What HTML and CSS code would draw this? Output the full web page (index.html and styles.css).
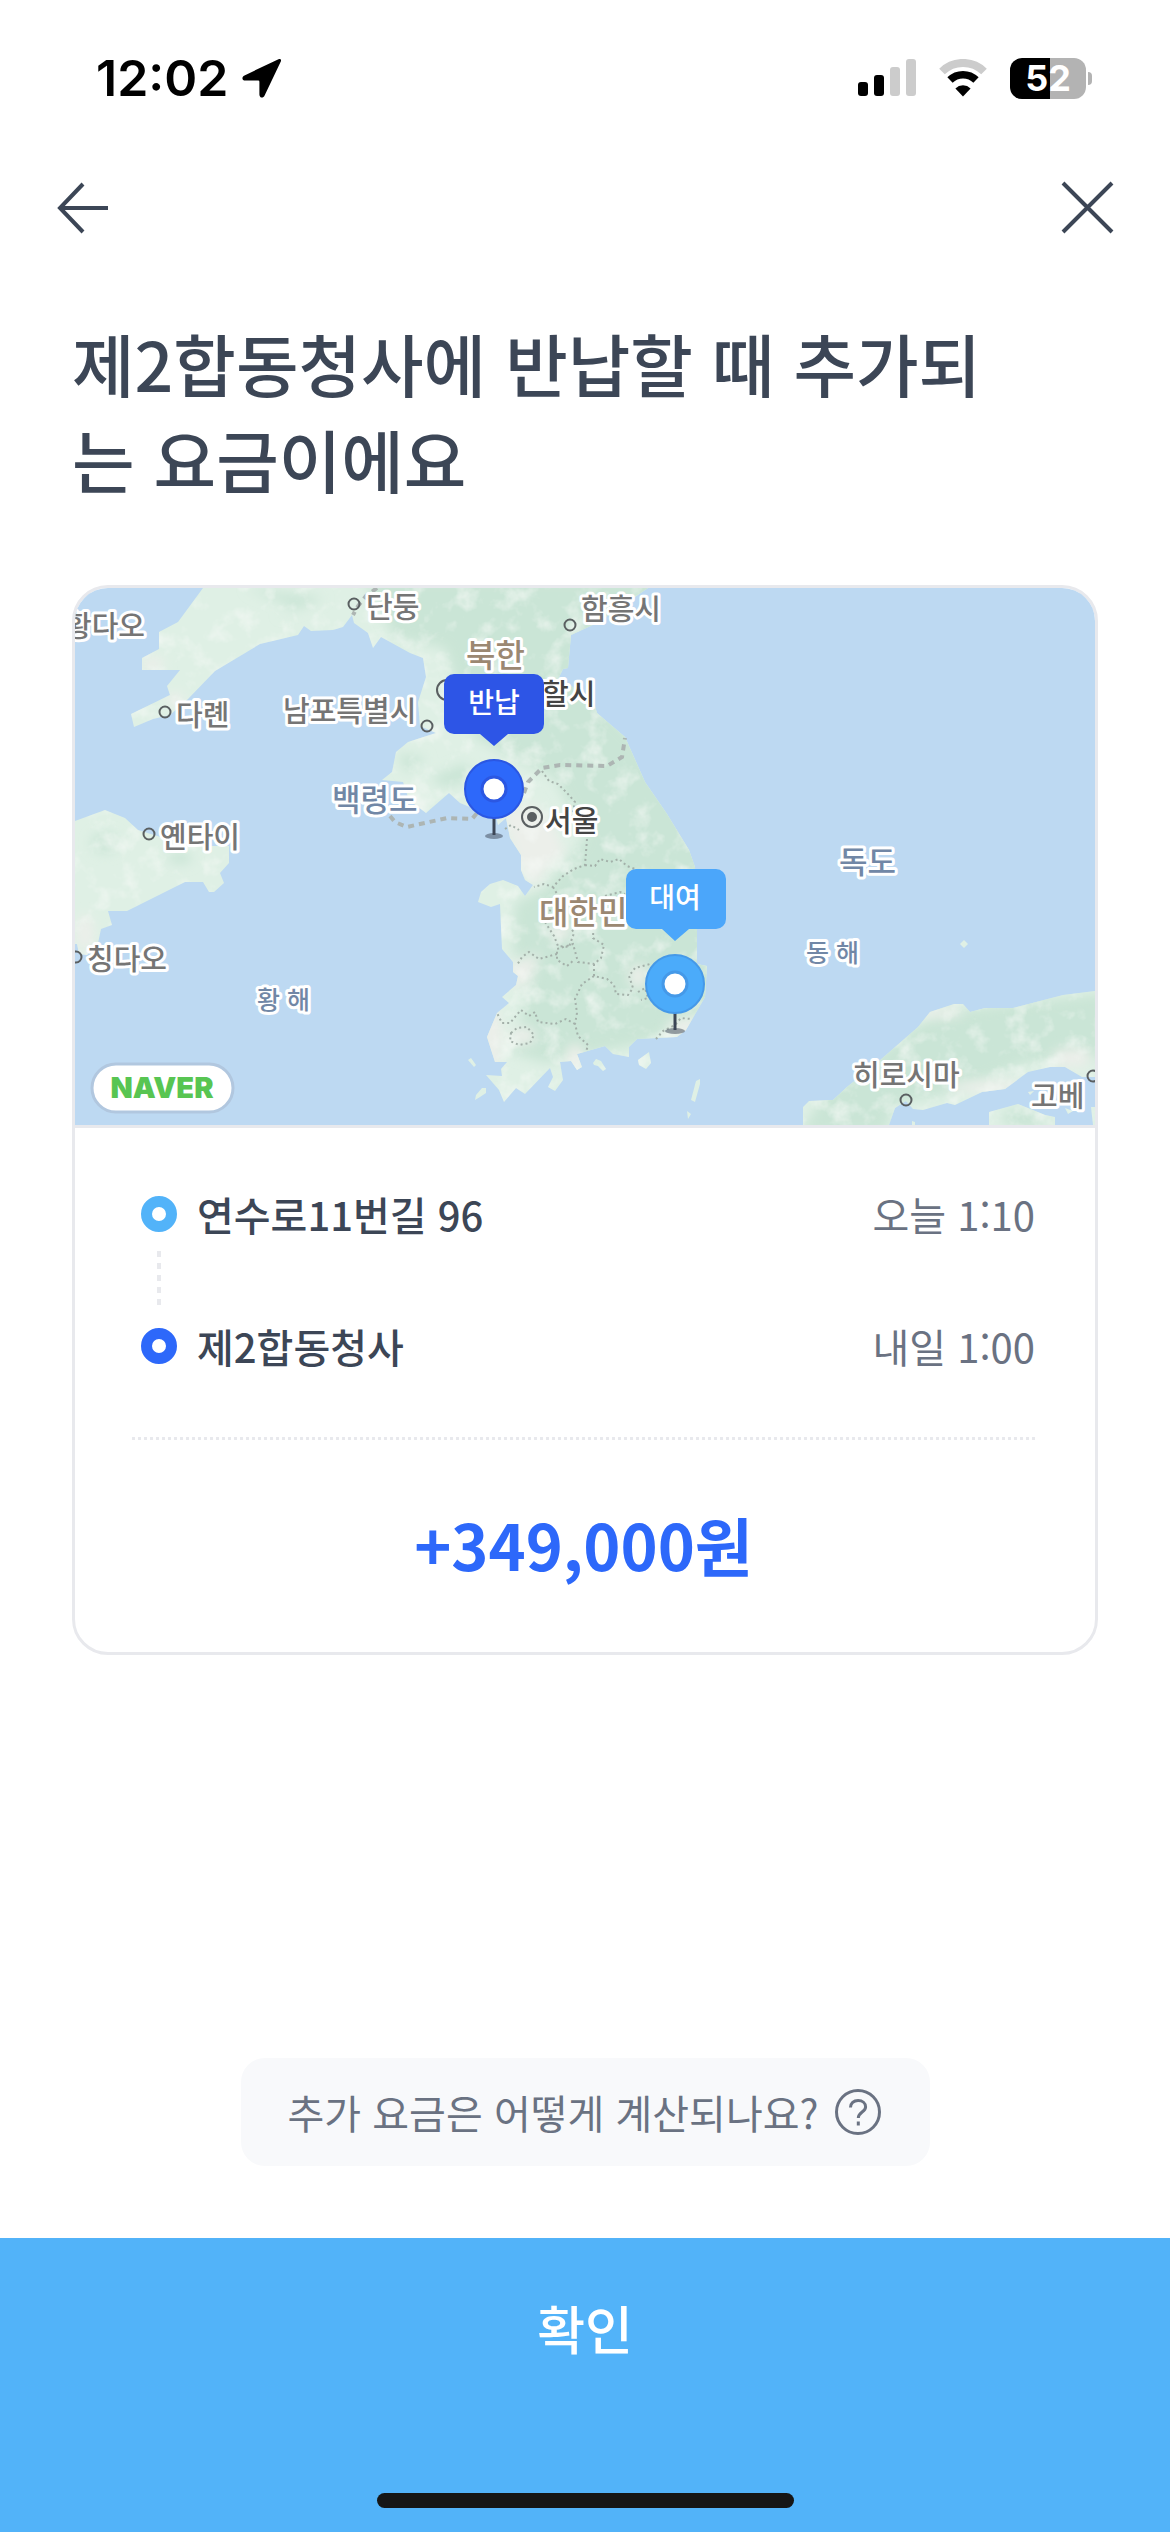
FILE: index.html
```html
<!DOCTYPE html>
<html lang="ko">
<head>
  <meta charset="UTF-8" />
  <meta name="viewport" content="width=device-width, initial-scale=1.0"/>
  <title>추가 요금 안내</title>
  <link rel="stylesheet" href="styles.css">
</head>
<body>
  <div class="status-bar">
    <div class="status-left">
      <span class="clock">12:02</span>
      <svg width="40" height="40" viewBox="0 0 40 40" aria-hidden="true">
        <path d="M36.500 1.200 2.500 17.400C-.6 19-.2 22.600 3.400 22.600H16.200q1.200 0 1.200 1.200V36.500c0 3.600 3.800 4.200 5.200 1L38.800 3.600C39.600 1.600 38.400.4 36.500 1.200z"/>
      </svg>
    </div>
    <div class="status-right">
      <svg width="58" height="38" viewBox="0 0 58 38" aria-hidden="true">
        <rect x="0" y="23" width="10" height="14" rx="3"/>
        <rect x="16" y="16" width="10" height="21" rx="3"/>
        <rect x="32" y="8" width="10" height="29" rx="3" fill="#ccc"/>
        <rect x="48" y="0" width="10" height="37" rx="3" fill="#ccc"/>
      </svg>
      <svg width="50" height="38" viewBox="0 0 50 38" aria-hidden="true">
        <path d="M4 12.500a30 30 0 0 1 42 0" fill="none" stroke="#ccc" stroke-width="8"/>
        <path d="M12 21a18.500 18.500 0 0 1 26 0" fill="none" stroke="#000" stroke-width="7.500"/>
        <path d="M25 37.500 17.400 29.400a11 11 0 0 1 15.200 0z"/>
      </svg>
      <div class="battery"><span>52</span></div>
    </div>
  </div>

  <header class="nav">
    <button type="button" aria-label="뒤로">
      <svg width="54" height="54" viewBox="0 0 54 54"><path d="M27 3 4 27l23 24M4 27h48"/></svg>
    </button>
    <button type="button" aria-label="닫기">
      <svg width="54" height="54" viewBox="0 0 54 54"><path d="M3 2l49 49M52 2 3 51"/></svg>
    </button>
  </header>

  <main class="content">
    <h1 class="title">제2합동청사에 반납할 때 추가되<br>는 요금이에요</h1>

    <section class="card">
      <svg class="map" viewBox="0 0 1020 537" role="img" aria-label="대여 및 반납 위치">
        <defs>
          <clipPath id="land">
            <path d="M128 0 103 34 84 44V61L67 70V82H105L92 98 95 107 56 126 59 139 78 131 95 127 113 111 140 83 185 56 223 47 229 38 236 43 258 42 268 39 277 27 279 35 293 45 298 60 306 49 335 65 348 70 351 89 343 114 345 138 361 145 333 154 321 164 317 184 307 192 328 194 334 212 351 225 374 205 385 215 402 222 420 224 423 237 431 230 435 250 446 267 446 282 450 292 458 297 450 308 443 298 428 292 415 296 406 304 403 314 416 319 425 316 427 361 438 374V384L443 388 441 397 427 409 434 415 422 425 412 449 420 474 432 474 426 481 427 488 411 487 424 502 429 514 441 500 450 506 475 480 478 489 473 499 480 503 488 492 485 474 496 473 502 482 507 479 502 466 530 458 538 466 554 469V459L562 451 602 449 611 442 630 409 632 378 622 376V342L620 279 614 262 592 226 570 194 550 149 522 125 519 115 484 89 488 81 493 80 496 47 522 35 573 0z"/>
            <path d="M0 233 30 222 50 230 63 242 95 252 137 258H154V275L145 285 149 295 139 304H134L128 294H110L52 323H33L37 337 26 341 23 355 12 367 4 366 2 356H0z"/>
            <path d="M1020 403 988 407 938 420H910L895 424 888 416H879L855 424 843 439 803 474 772 499 758 512 734 513 728 519V537H814L820 520 831 513 838 521 848 522 872 515 880 517 907 504 930 501 953 484 975 479H990L1007 489H1020z"/>
            <path d="M914 537V524L943 516 970 527 980 529V537zM1016 519H1020V537H1018z"/>
            <path d="M393 472l6 7 2-2-5-7zM400 512l1-5 6-7h4v5l-6 4zM518 475l3-4 5 2 5 8-3 2-5-5-4-1zM563 472l11-8 2 11-5 6-7-4zM616 512l5-19 4-2v5l-5 18zM612 523l4 3-3 5zM837 533l3 1v3h-3zM953 504l6-1-4 4zM990 520l8 3-5 3z"/>
            <path d="M885 356l4-4 4 4-4 4z"/>
          </clipPath>
          <filter id="soft" x="-30%" y="-30%" width="160%" height="160%"><feGaussianBlur stdDeviation="6"/></filter>
          <filter id="relief" x="0" y="0" width="100%" height="100%">
            <feTurbulence type="fractalNoise" baseFrequency="0.045" numOctaves="4" seed="8"/>
            <feColorMatrix values="0 0 0 0 0.92  0 0 0 0 0.95  0 0 0 0 0.92  1.800 0 0 0 -0.900"/>
          </filter>
        </defs>

        <rect width="1020" height="537" fill="#bdd9f2"/>
        <g clip-path="url(#land)">
          <rect width="1020" height="537" fill="#dff0e5"/>
          <g fill="#cae5d6" filter="url(#soft)">
            <path d="M290-10H600L500 90 560 150 650 280V410L570 455 470 475 437 465 452 405 438 360 440 315 470 300 510 250 480 190 400 150 370 60 320 50z"/>
            <path d="M725 545 750 505 860 425 1030 405V470L950 475 880 505 820 515 810 545z"/>
            <path d="M170 0 220 20 200 30 250 10zM322 165l30 5-20 15zM355 190l35-15 10 15-30 10z"/>
            <ellipse cx="30" cy="255" rx="14" ry="10"/>
            <ellipse cx="105" cy="270" rx="12" ry="6"/>
            <ellipse cx="950" cy="530" rx="24" ry="10"/>
          </g>
          <g fill="#ecefea" filter="url(#soft)">
            <path d="M425 225 460 215 480 240 490 265 472 280 460 300 445 280z"/>
            <path d="M405 430 420 415 428 445 425 480 410 480z"/>
            <path d="M435 375 465 365 455 395 435 400z"/>
            <ellipse cx="485" cy="344" rx="11" ry="8"/>
            <ellipse cx="448" cy="448" rx="13" ry="9"/>
            <ellipse cx="563" cy="388" rx="9" ry="12"/>
            <ellipse cx="610" cy="440" rx="18" ry="9"/>
            <ellipse cx="500" cy="470" rx="9" ry="14"/>
            <ellipse cx="860" cy="425" rx="28" ry="5"/>
            <ellipse cx="915" cy="499" rx="45" ry="6"/>
            <ellipse cx="997" cy="470" rx="20" ry="10"/>
            <ellipse cx="78" cy="76" rx="12" ry="7"/>
            <ellipse cx="100" cy="112" rx="10" ry="7"/>
            <ellipse cx="10" cy="345" rx="9" ry="18"/>
          </g>
          <rect width="1020" height="537" filter="url(#relief)"/>
        </g>

        <g class="borders">
          <path class="border-main" d="M315 228 320 234 332 239 372 230 397 231 402 225M449 205 453 194 467 180 485 177 532 178 547 169 550 150"/>
          <path class="border-main" d="M302 0 291 8 283 18 278 27"/>
          <path d="M467 183 474 193 483 196 492 205 500 214 497 228M430 241 436 237 444 242M512 251 510 277 499 281 488 288 478 299 469 296 459 299M510 277 520 278 525 271 535 274 544 271 552 278 560 281M478 299 482 306 474 325M470 334 479 348 483 358 494 359 499 345 496 340M519 325 518 350 529 357 526 370 519 376 503 374 498 356 482 361 482 372 492 378 499 372M482 366 464 371 454 364 447 369 442 377M519 376 519 388 532 391 539 397 541 406 553 407 558 400 554 388 560 380 575 376M519 388 507 396 500 411 502 425 500 436 503 448 513 457 511 464M500 436 491 431 480 436 463 434 460 424 454 428 446 422 440 429 435 435 427 435 422 425M436 445 442 440 452 439 459 447 455 455 444 457 435 453zM563 404 570 400 573 410 566 412M530 308 545 304 550 306M581 451 588 443 600 437 606 430 616 431"/>
        </g>

        <g class="cities">
          <circle cx="90" cy="124" r="5.500"/>
          <circle cx="279" cy="16" r="5.500"/>
          <circle cx="495" cy="37" r="5.500"/>
          <circle cx="352" cy="138" r="5.500"/>
          <circle cx="74" cy="246" r="5.500"/>
          <circle cx="1" cy="369" r="5.500"/>
          <circle cx="831" cy="512" r="5.500"/>
          <circle cx="1018" cy="488" r="5.500"/>
          <circle cx="372" cy="102" r="10"/>
          <circle cx="457" cy="229" r="10"/>
          <circle class="capital" cx="457" cy="229" r="4"/>
        </g>

        <g class="labels">
          <text x="70" y="49" text-anchor="end">황다오</text>
          <text x="101" y="138">다롄</text>
          <text x="291" y="30">단둥</text>
          <text x="506" y="32">함흥시</text>
          <text x="208" y="134">남포특별시</text>
          <text x="85" y="260">옌타이</text>
          <text x="12" y="382">칭다오</text>
          <text x="778" y="498">히로시마</text>
          <text x="956" y="519">고베</text>
          <text class="city" x="467" y="117">할시</text>
          <text class="city" x="470" y="244">서울</text>
          <text class="country" x="391" y="79">북한</text>
          <text class="country" x="464" y="336">대한민</text>
          <text class="island" x="257" y="223">백령도</text>
          <text class="island" x="764" y="285">독도</text>
          <text class="sea" x="182" y="421">황 해</text>
          <text class="sea" x="731" y="374">동 해</text>
        </g>

        <g class="pin pin-return">
          <ellipse cx="419" cy="248" rx="9" ry="3"/>
          <path class="stem" d="M419 229V247"/>
          <circle cx="419" cy="201" r="29"/>
          <circle class="hole" cx="419" cy="201" r="12"/>
          <path class="bubble" d="M379 86H459a10 10 0 0 1 10 10V136a10 10 0 0 1-10 10H433L419 158 405 146H379a10 10 0 0 1-10-10V96a10 10 0 0 1 10-10z"/>
          <text x="419" y="125">반납</text>
        </g>
        <g class="pin pin-rent">
          <ellipse cx="600" cy="443" rx="10" ry="3"/>
          <path class="stem" d="M600 424V442"/>
          <circle cx="600" cy="396" r="29"/>
          <circle class="hole" cx="600" cy="396" r="12"/>
          <path class="bubble" d="M561 281H641a10 10 0 0 1 10 10V331a10 10 0 0 1-10 10H614L600 353 587 341H561a10 10 0 0 1-10-10V291a10 10 0 0 1 10-10z"/>
          <text x="600" y="320">대여</text>
        </g>

        <rect x="17" y="476" width="141" height="48" rx="24" fill="#fff" stroke="#b1c7df" stroke-width="3"/>
        <text class="provider" x="87" y="510">NAVER</text>
      </svg>

      <div class="card-body">
        <ul class="route">
          <li class="stop">
            <i class="dot dot-rent"></i>
            <span class="place">연수로11번길 96</span>
            <time>오늘 1:10</time>
          </li>
          <li class="stop">
            <i class="dot dot-return"></i>
            <span class="place">제2합동청사</span>
            <time>내일 1:00</time>
          </li>
        </ul>
        <p class="price">+349,000원</p>
      </div>
    </section>

    <button type="button" class="help">
      추가 요금은 어떻게 계산되나요?
      <svg width="48" height="48" viewBox="0 0 48 48" aria-hidden="true">
        <circle cx="24" cy="24" r="21.500"/>
        <path d="M16.500 19.500c0-4.200 3.200-7 7.600-7s7.500 2.600 7.500 6.400c0 5-7.300 5.400-7.300 11.100"/>
        <path d="M24.300 33.500v4"/>
      </svg>
    </button>
  </main>

  <footer class="bottom">
    <button type="button" class="confirm">확인</button>
    <div class="home-indicator"></div>
  </footer>
</body>
</html>
```
FILE: styles.css
```css
* {
  box-sizing: border-box;
}
body {
  margin: 0;
  min-height: 100vh;
  display: flex;
  flex-direction: column;
  background-color: #fff;
  font-family: "Noto Sans CJK KR", "Noto Sans", sans-serif;
  color: #3c4656;
}
button {
  border: none;
  background: none;
  padding: 0;
  font-family: inherit;
  cursor: pointer;
}

/* status bar */
.status-bar {
  display: flex;
  justify-content: space-between;
  align-items: center;
  height: 156px;
  padding: 0 84px 0 96px;
}
.status-left,
.status-right {
  display: flex;
  align-items: center;
}
.status-left {
  gap: 14px;
}
.status-right {
  gap: 22px;
}
.clock {
  font-family: Inter, sans-serif;
  font-size: 50px;
  font-weight: 600;
  color: #000;
}
.battery {
  position: relative;
  width: 76px;
  height: 41px;
  border-radius: 12px;
  background: linear-gradient(90deg, #000 52%, #b3b3b3 52%);
  color: #fff;
  font-family: Inter, sans-serif;
  font-size: 36px;
  font-weight: 700;
  line-height: 41px;
  text-align: center;
}
.battery::after {
  content: "";
  position: absolute;
  right: -6px;
  top: 14px;
  width: 4px;
  height: 13px;
  border-radius: 0 4px 4px 0;
  background-color: #b3b3b3;
}

/* navigation */
.nav {
  display: flex;
  justify-content: space-between;
  padding: 25px 56px 0;
}
.nav button {
  display: flex;
  height: 56px;
}
.nav svg {
  fill: none;
  stroke: #3c4656;
  stroke-width: 4;
}

/* content */
.content {
  flex: 1;
  display: flex;
  flex-direction: column;
  padding: 78px 72px 72px;
}
.title {
  margin: 0 0 78px;
  font-size: 68px;
  font-weight: 500;
  line-height: 96px;
}
.card {
  border: 3px solid #e8e9ed;
  border-radius: 36px;
  overflow: hidden;
}
.map {
  display: block;
  width: 100%;
  border-bottom: 3px solid #e8e9ed;
}
.card-body {
  padding: 56px 60px 60px 57px;
}
.route {
  list-style: none;
  margin: 0;
  padding: 0 0 61px 9px;
  display: flex;
  flex-direction: column;
  gap: 72px;
  border-bottom: 3px solid transparent;
  background: repeating-linear-gradient(90deg, #e8e9ed 0 3px, transparent 3px 6px) bottom / 100% 3px no-repeat border-box;
}
.stop {
  position: relative;
  display: flex;
  align-items: center;
  gap: 20px;
  font-size: 40px;
  line-height: 60px;
}
/* dashed link between the two stops */
.stop:first-child::after {
  content: "";
  position: absolute;
  left: 16px;
  top: 67px;
  width: 4px;
  height: 54px;
  background: repeating-linear-gradient(#e8e9ed 0 6px, transparent 6px 12px);
}
.dot {
  width: 36px;
  height: 36px;
  border: 11px solid;
  border-radius: 50%;
}
.dot-rent {
  border-color: #52b3f9;
}
.dot-return {
  border-color: #2d68fa;
}
.place {
  flex: 1;
  font-weight: 500;
}
.stop time {
  color: #6a7282;
}
.price {
  margin: 56px 0 0;
  color: #2d68fa;
  font-size: 63px;
  font-weight: 700;
  line-height: 96px;
  text-align: center;
}
.help {
  display: flex;
  align-items: center;
  gap: 15px;
  align-self: center;
  height: 108px;
  margin-top: auto;
  padding: 0 48px 0 47px;
  border-radius: 24px;
  background-color: #f8f9fb;
  color: #6a7282;
  font-size: 40px;
}
.help svg {
  fill: none;
  stroke: #6a7282;
  stroke-width: 3;
}

/* map */
.borders path {
  fill: none;
  stroke: #a3b0a9;
  stroke-width: 2;
  stroke-dasharray: 2 3;
}
.borders .border-main {
  stroke: #adb5b3;
  stroke-width: 4;
  stroke-dasharray: 6 5;
}
.cities circle {
  fill: none;
  stroke: #5a5f61;
  stroke-width: 2;
}
.cities .capital {
  fill: #5a5f61;
}
.labels text {
  font-size: 29px;
  font-weight: 500;
  fill: #757575;
  stroke: #fff;
  stroke-width: 6;
  stroke-linejoin: round;
  paint-order: stroke;
}
.labels .city {
  fill: #444;
}
.labels .country {
  font-size: 32px;
  fill: #9b8872;
}
.labels .island {
  font-size: 31px;
  fill: #7187a6;
}
.labels .sea {
  font-size: 25px;
  fill: #7187a6;
}
.pin text {
  font-size: 28px;
  font-weight: 500;
  fill: #fff;
  text-anchor: middle;
}
.pin ellipse {
  fill: #3c4656;
  fill-opacity: 0.5;
}
.pin .stem {
  stroke: #3c4656;
  stroke-width: 3;
}
.pin circle {
  stroke-width: 2;
}
.pin .hole {
  fill: #fff;
  stroke-width: 3;
}
.pin-return circle {
  fill: #2d68fa;
  stroke: #2b57e2;
}
.pin-return .bubble {
  fill: #2d55e6;
}
.pin-rent circle {
  fill: #4babfa;
  stroke: #4599e8;
}
.pin-rent .bubble {
  fill: #4ba6fa;
}
.provider {
  font-family: Inter, sans-serif;
  font-size: 29px;
  font-weight: 900;
  fill: #58c552;
  text-anchor: middle;
}

/* bottom */
.bottom {
  position: relative;
}
.confirm {
  display: block;
  width: 100%;
  padding: 50px 0 164px;
  background-color: #52b3f9;
  color: #fff;
  font-size: 52px;
  font-weight: 500;
  line-height: 80px;
}
.home-indicator {
  position: absolute;
  left: 0;
  right: 0;
  bottom: 24px;
  width: 417px;
  height: 15px;
  margin: 0 auto;
  border-radius: 8px;
  background-color: #161616;
}
```
